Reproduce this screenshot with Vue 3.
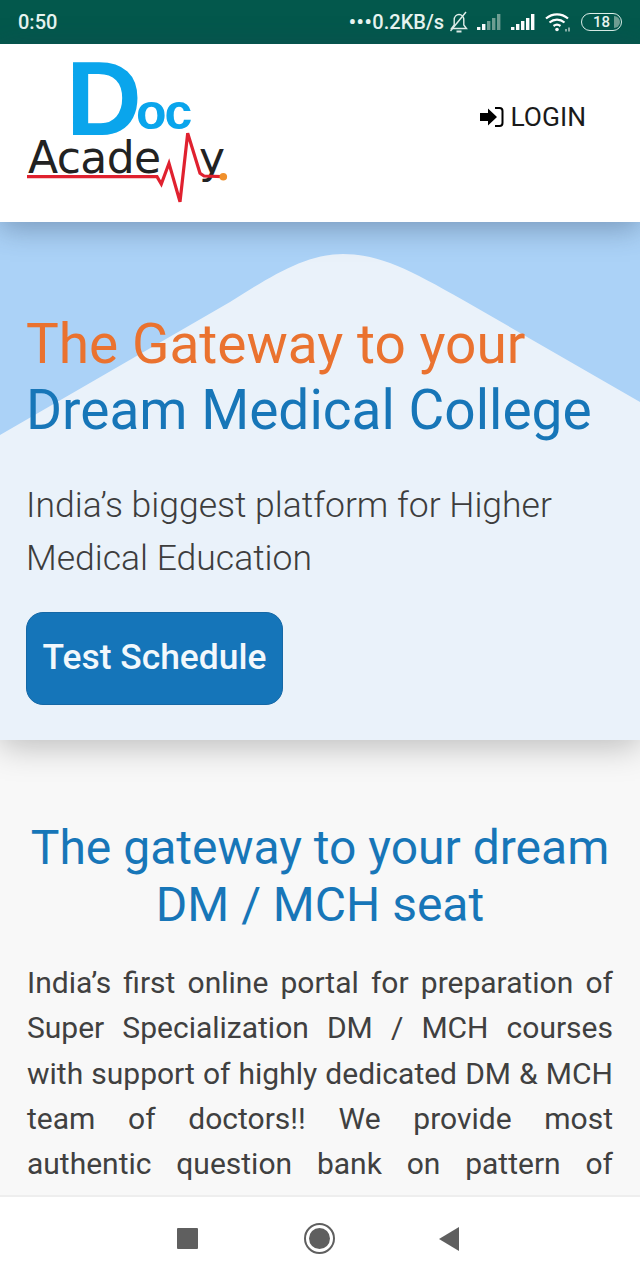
<template>
  <div class="phone">
    <div class="statusbar">
      <span class="time">0:50</span>
      <div class="statusright">
        <span class="speed"><b>•••</b>0.2KB/s</span>
        <svg class="bell" width="20" height="22" viewBox="0 0 20 22" fill="none" stroke="#e3f1ec" stroke-width="1.4">
          <path d="M2.500 17.500h15l-2.700-3.500V9C14.800 5.500 12.500 3.500 10 3.500S5.200 5.500 5.200 9v5z" />
          <path d="M7.500 20.500h5" stroke-width="2" />
          <path d="M1.500 20L17 1" />
        </svg>
        <svg width="26" height="18" viewBox="0 0 26 18" class="signal">
          <rect v-for="(b, i) in bars" :key="i" :x="i * 5" :y="17 - b" width="3.400" :height="b" :fill="i < 2 ? '#fff' : '#6f9f93'" />
        </svg>
        <svg width="26" height="18" viewBox="0 0 26 18" class="signal">
          <rect v-for="(b, i) in bars" :key="i" :x="i * 5" :y="17 - b" width="3.400" :height="b" fill="#fff" />
        </svg>
        <svg class="wifi" width="26" height="20" viewBox="0 0 26 20" fill="none" stroke="#fff" stroke-width="2.200">
          <path d="M1 6.500C7.500 1 16.500 1 23 6.500" />
          <path d="M4.500 10.500c4.500-3.800 10.500-3.800 15 0" />
          <path d="M8.500 14c2.200-1.600 4.800-1.600 7 0" />
          <circle cx="12" cy="17.500" r="1.800" fill="#fff" stroke="none" />
          <path d="M21 17v2.500M24 15.500v4" stroke-width="1.300" stroke="#cfe3dd" />
        </svg>
        <div class="battery"><span class="level"></span><span class="pct">18</span></div>
      </div>
    </div>

    <header class="topbar">
      <svg class="logo" width="210" height="146" viewBox="0 0 210 146">
        <text x="42" y="75" class="logo-d">D</text>
        <text x="112" y="68.500" class="logo-oc">oc</text>
        <text x="4" y="113" class="logo-academy">Acade</text>
        <text x="175" y="113" class="logo-academy">y</text>
        <polyline points="3,116.700 133,116.700 137.300,124 145,103.300 156,141.700 163.700,73.300 176,113.300 180,116 199,116.700" fill="none" stroke="#e0212f" stroke-width="3.200" stroke-linejoin="miter" />
        <circle cx="199.300" cy="116.700" r="3.800" fill="#f0902c" />
      </svg>
      <a class="login">
        <svg width="24" height="20" viewBox="0 0 24 20">
          <path d="M0 6h8V1.500L17 10l-9 8.500V14H0z" fill="#000" />
          <path d="M15 1h4.500a3 3 0 0 1 3 3v12a3 3 0 0 1-3 3H15" fill="none" stroke="#000" stroke-width="2" />
        </svg>
        <span>LOGIN</span>
      </a>
    </header>

    <section class="hero">
      <svg class="hill" viewBox="0 0 640 518" preserveAspectRatio="none">
        <path d="M0 213L230 80C270 55 305 32 343 32C380 32 410 48 463 78L640 180V518H0z" fill="#eaf2fa" />
      </svg>
      <div class="herotext">
        <h1><span class="orange">The Gateway to your</span><br /><span class="blue">Dream Medical College</span></h1>
        <p>India’s biggest platform for Higher Medical Education</p>
        <a class="cta">Test Schedule</a>
      </div>
    </section>

    <section class="about">
      <h2>The gateway to your dream DM / MCH seat</h2>
      <p>India’s first online portal for preparation of Super Specialization DM / MCH courses with support of highly dedicated DM &amp; MCH team of doctors!! We provide most authentic question bank on pattern of actual examination with detailed explanation for every question and answer.</p>
    </section>

    <nav class="navbar">
      <span class="square"></span>
      <span class="home"><span></span></span>
      <span class="back"></span>
    </nav>
  </div>
</template>

<script setup>
const bars = [3, 6, 9, 12, 16];
</script>

<style>
html, body {
  margin: 0;
  background: #fff;
}
</style>

<style scoped>
.phone {
  width: 640px;
  height: 1280px;
  display: flex;
  flex-direction: column;
  position: relative;
  overflow: hidden;
  font-family: Roboto, "Liberation Sans", sans-serif;
}

.statusbar {
  height: 44px;
  flex: none;
  background: #03584c;
  color: #e8f5f1;
  display: flex;
  align-items: center;
  justify-content: space-between;
  padding: 0 18px;
  box-sizing: border-box;
  font-weight: 500;
  font-size: 20px;
}

.statusright {
  display: flex;
  align-items: center;
  gap: 8px;
}

.speed {
  margin-right: -3px;
  white-space: nowrap;
}

.speed b {
  font-weight: 700;
  letter-spacing: 0.7px;
}

.battery {
  width: 41px;
  height: 18px;
  margin-left: 2px;
  border: 1.5px solid #dcefe9;
  border-radius: 9px;
  position: relative;
  box-sizing: border-box;
  display: flex;
  align-items: center;
  justify-content: center;
  font-size: 15px;
  line-height: 1;
}

.level {
  position: absolute;
  right: 1px;
  top: 1.500px;
  width: 6px;
  height: 12px;
  background: #6f9f93;
  border-radius: 0 6px 6px 0;
}

.topbar {
  height: 178px;
  flex: none;
  background: #fff;
  display: flex;
  align-items: center;
  justify-content: space-between;
  padding: 0 54px 0 24px;
  box-sizing: border-box;
  position: relative;
  z-index: 2;
  box-shadow: 0 6px 28px rgba(40, 60, 90, 0.4);
}

.logo {
  overflow: visible;
}

.logo-d {
  font: 700 105px "Liberation Sans", sans-serif;
  fill: #0aa5ec;
}

.logo-oc {
  font: 700 50px "Liberation Sans", sans-serif;
  letter-spacing: -2px;
  fill: #0aa5ec;
}

.logo-academy {
  font: 400 44px "DejaVu Sans", sans-serif;
  letter-spacing: -0.6px;
  fill: #222;
}

.login {
  display: flex;
  align-items: center;
  gap: 6px;
  font-size: 26.400px;
  color: #1a1a1a;
  margin-top: -32px;
}

.hero {
  height: 518px;
  flex: none;
  background: #abd2f7;
  position: relative;
  z-index: 1;
  box-shadow: 0 6px 32px rgba(0, 0, 0, 0.25);
}

.hill {
  position: absolute;
  inset: 0;
  width: 100%;
  height: 100%;
}

.herotext {
  position: relative;
  padding: 89px 26px 0;
}

h1 {
  margin: 0;
  font-weight: 400;
  font-size: 55px;
  line-height: 66px;
}

.orange {
  color: #ea722f;
}

.blue {
  color: #1776b8;
}

.herotext p {
  margin: 36px 0 0;
  font-size: 35.500px;
  line-height: 53px;
  font-weight: 300;
  color: #3d3d3d;
  width: 560px;
}

.cta {
  display: block;
  width: 257px;
  height: 93px;
  margin-top: 27px;
  box-sizing: border-box;
  background: #1575b9;
  border: 1px solid #1568a6;
  border-radius: 17px;
  color: #f2f8fc;
  font-size: 35.400px;
  font-weight: 500;
  line-height: 89px;
  text-align: center;
}

.about {
  flex: 1;
  background: #f8f8f8;
  padding: 79px 27px 0;
}

h2 {
  margin: 0;
  font-weight: 400;
  font-size: 48px;
  line-height: 57px;
  color: #1776b8;
  text-align: center;
}

.about p {
  margin: 27px 0 0;
  font-size: 30px;
  line-height: 45.300px;
  color: #404040;
  text-align: justify;
}

.navbar {
  position: absolute;
  left: 0;
  right: 0;
  bottom: 0;
  height: 85px;
  box-sizing: border-box;
  z-index: 3;
  background: #fff;
  border-top: 2px solid #eee;
  display: flex;
  align-items: center;
  justify-content: center;
  padding-right: 4px;
}

.square {
  width: 21px;
  height: 21px;
  background: #5f5f5f;
  border-radius: 1px;
  margin-right: 106px;
}

.home {
  width: 31px;
  height: 31px;
  border: 2px solid #5f5f5f;
  border-radius: 50%;
  box-sizing: border-box;
  display: flex;
  align-items: center;
  justify-content: center;
}

.home span {
  width: 21px;
  height: 21px;
  border-radius: 50%;
  background: #5f5f5f;
}

.back {
  margin-left: 104px;
  width: 0;
  height: 0;
  border-style: solid;
  border-width: 12px 20px 12px 0;
  border-color: transparent #5f5f5f transparent transparent;
}
</style>
